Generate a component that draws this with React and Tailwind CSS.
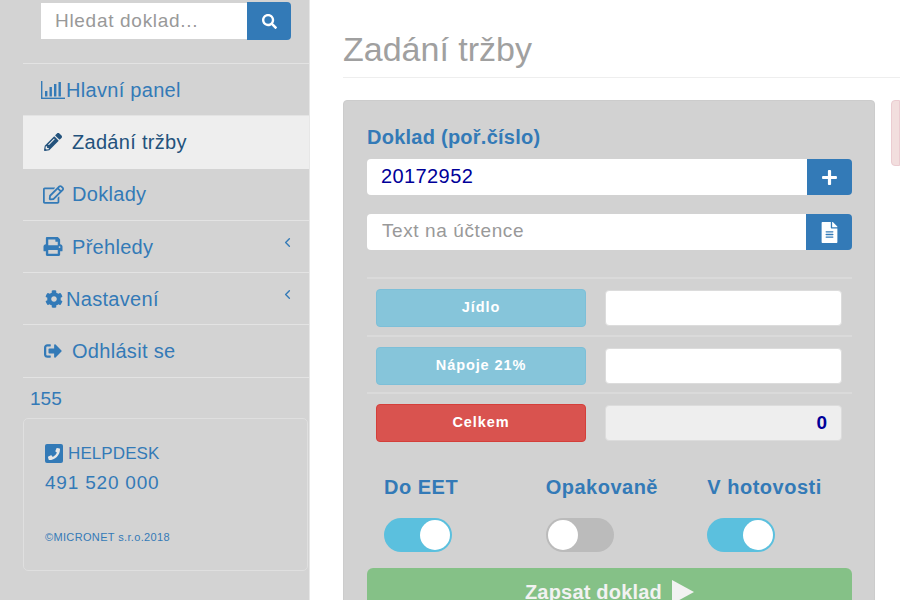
import React from 'react';
import { FaSearch, FaPencilAlt, FaRegEdit, FaPrint, FaCog, FaSignOutAlt, FaPhoneAlt, FaPlus, FaFileAlt } from 'react-icons/fa';
import { ChevronLeft } from 'lucide-react';

const BarChartIcon = () => (
  <svg viewBox="0 0 24 18" className="w-[24px] h-[18px]" fill="currentColor">
    <rect x="0" y="0" width="1.4" height="18" />
    <rect x="0" y="16.6" width="24" height="1.4" />
    <rect x="4" y="10" width="2.4" height="5.5" />
    <rect x="8.5" y="6" width="2.4" height="9.5" />
    <rect x="13" y="3" width="2.4" height="12.5" />
    <rect x="17.5" y="1" width="2.4" height="14.5" />
  </svg>
);

const menu = [
  { label: 'Hlavní panel', icon: <BarChartIcon />, gap: 'ml-[1px]', pad: 'pl-[18px]' },
  { label: 'Zadání tržby', icon: <FaPencilAlt className="w-[18px] h-[18px]" />, active: true, gap: 'ml-[10px]', pad: 'pl-[21px]' },
  { label: 'Doklady', icon: <FaRegEdit className="w-[21px] h-[19px]" />, gap: 'ml-[8px]', pad: 'pl-[20px]' },
  { label: 'Přehledy', icon: <FaPrint className="w-[20px] h-[19px]" />, arrow: true, gap: 'ml-[9px]', pad: 'pl-[20px]' },
  { label: 'Nastavení', icon: <FaCog className="w-[18px] h-[18px]" />, arrow: true, gap: 'ml-[3px]', pad: 'pl-[22px]' },
  { label: 'Odhlásit se', icon: <FaSignOutAlt className="w-[20px] h-[18px]" />, gap: 'ml-[9px]', pad: 'pl-[20px]' },
];

const amounts = [
  { label: 'Jídlo', btn: 'bg-[#86c5da] border-[#7dbfd8]', input: 'bg-white' },
  { label: 'Nápoje 21%', btn: 'bg-[#86c5da] border-[#7dbfd8]', input: 'bg-white' },
  { label: 'Celkem', btn: 'bg-[#d9534f] border-[#d43f3a]', input: 'bg-[#eeeeee]', value: '0' },
];

const toggles = [
  { label: 'Do EET', on: true },
  { label: 'Opakovaně', on: false },
  { label: 'V hotovosti', on: true },
];

function Toggle({ on }) {
  return (
    <div className={`w-[68px] h-[34px] rounded-full p-[2px] flex ${on ? 'bg-[#5bc0de] justify-end' : 'bg-[#bbbbbb] justify-start'}`}>
      <div className="w-[30px] h-[30px] rounded-full bg-white" />
    </div>
  );
}

export default function App() {
  return (
    <div className="w-[900px] h-[600px] flex overflow-hidden bg-white font-['Liberation_Sans',Arial,sans-serif] text-[#337ab7]">
      {/* sidebar */}
      <aside className="w-[310px] shrink-0 bg-[#d3d3d3] border-r border-[#e7e7e7] pl-[23px] pt-[2px]">
        <div className="flex h-[38px] ml-[18px] w-[250px]">
          <input
            readOnly
            placeholder="Hledat doklad..."
            className="w-[206px] h-[36px] mt-[1px] bg-white px-[14px] text-[19px] tracking-[0.7px] placeholder:text-[#999999] outline-none"
          />
          <button className="w-[44px] h-[38px] bg-[#337ab7] rounded-r-[4px] flex items-center justify-center text-white">
            <FaSearch className="w-[15px] h-[15px]" />
          </button>
        </div>
        <nav className="mt-[23px] border-t border-[#e3e3e3]">
          {menu.map((m) => (
            <div
              key={m.label}
              className={`h-[52.3px] flex items-center pr-[15px] text-[20px] tracking-[0.3px] border-b ${m.pad} ${m.active ? 'bg-[#eeeeee] text-[#23527c] border-[#eeeeee]' : 'border-[#e3e3e3]'}`}
            >
              {m.icon}
              <span className={m.gap}>{m.label}</span>
              {m.arrow && <ChevronLeft strokeWidth={2.2} className="ml-auto mb-[8px] -mr-[1px] w-[15px] h-[17px]" />}
            </div>
          ))}
        </nav>
        <div className="pl-[7px] mt-[9px] text-[19px] leading-[24px]">155</div>
        <div className="mt-[7px] w-[285px] h-[153px] border border-[#dfdfdf] rounded-[5px] pl-[21px] pt-[25px]">
          <div className="flex items-center text-[17px] leading-[20px] tracking-[0.1px]">
            <span className="w-[18px] h-[19px] bg-[#337ab7] rounded-[2px] flex items-center justify-center">
              <FaPhoneAlt className="w-[12px] h-[12px] text-[#e6e6e6] -scale-x-100" />
            </span>
            <span className="ml-[5px]">HELPDESK</span>
          </div>
          <div className="mt-[7px] text-[19px] leading-[24px] tracking-[0.8px]">491 520 000</div>
          <div className="mt-[35px] text-[11px] leading-[14px] tracking-[0.35px]">©MICRONET s.r.o.2018</div>
        </div>
      </aside>

      {/* main */}
      <main className="flex-1 pl-[33px]">
        <h1 className="h-[78px] pt-[28px] text-[34px] leading-[42px] text-[#a0a0a0] border-b border-[#eeeeee]">Zadání tržby</h1>
        <div className="flex mt-[22px] gap-[16px]">
          <section className="w-[532px] shrink-0 h-[520px] bg-[#d2d2d2] border border-[#cccccc] rounded-[4px] pl-[23px] pr-[22px] pt-[24px]">
            <label className="block text-[20px] leading-[24px] font-bold tracking-[0.25px]">Doklad (poř.číslo)</label>
            <div className="flex mt-[10px] h-[36px]">
              <input readOnly value="20172952" className="flex-1 min-w-0 bg-white rounded-l-[4px] pl-[14px] pb-[2px] text-[20px] tracking-[0.4px] text-[#000099] outline-none" />
              <button className="w-[45px] bg-[#337ab7] rounded-r-[4px] flex items-center justify-center text-white">
                <FaPlus className="w-[17px] h-[17px]" />
              </button>
            </div>
            <div className="flex mt-[19px] h-[36px]">
              <input readOnly placeholder="Text na účtence" className="flex-1 min-w-0 bg-white rounded-l-[4px] pl-[15px] pb-[2px] text-[19px] tracking-[0.6px] placeholder:text-[#999999] outline-none" />
              <button className="w-[46px] bg-[#337ab7] rounded-r-[4px] flex items-center justify-center text-white">
                <FaFileAlt className="w-[17px] h-[21px]" />
              </button>
            </div>
            <div className="mt-[27px]">
              {amounts.map((a) => (
                <div key={a.label} className="border-t-2 border-[#dadada] h-[57.5px] pt-[10px] pl-[9px] pr-[10px] flex items-start gap-[19px]">
                  <button className={`w-[210px] h-[38px] shrink-0 border rounded-[4px] text-white text-[14.5px] font-bold tracking-[0.9px] ${a.btn}`}>{a.label}</button>
                  <input readOnly value={a.value || ''} className={`flex-1 min-w-0 h-[36px] mt-[1px] rounded-[4px] border border-[#dcdcdc] text-right pr-[14px] text-[19px] font-bold text-[#000099] outline-none ${a.input}`} />
                </div>
              ))}
            </div>
            <div className="grid grid-cols-3 mt-[25px]">
              {toggles.map((t) => (
                <div key={t.label} className="pl-[17px]">
                  <div className="text-[20px] leading-[24px] font-bold tracking-[0.5px] whitespace-nowrap">{t.label}</div>
                  <div className="mt-[19px]"><Toggle on={t.on} /></div>
                </div>
              ))}
            </div>
            <button className="mt-[16px] w-full h-[48px] bg-[#85c187] rounded-[6px] text-[#f2f2f2] text-[20px] tracking-[0.2px] font-bold flex items-center justify-center gap-[10px]">
              Zapsat doklad
              <svg viewBox="0 0 22 24" className="w-[22px] h-[24px]" fill="currentColor"><path d="M0 0 L22 12 L0 24 Z" /></svg>
            </button>
          </section>
          <div className="flex-1 h-[66px] bg-[#f2dede] border border-[#ebccd1] rounded-l-[4px]" />
        </div>
      </main>
    </div>
  );
}
